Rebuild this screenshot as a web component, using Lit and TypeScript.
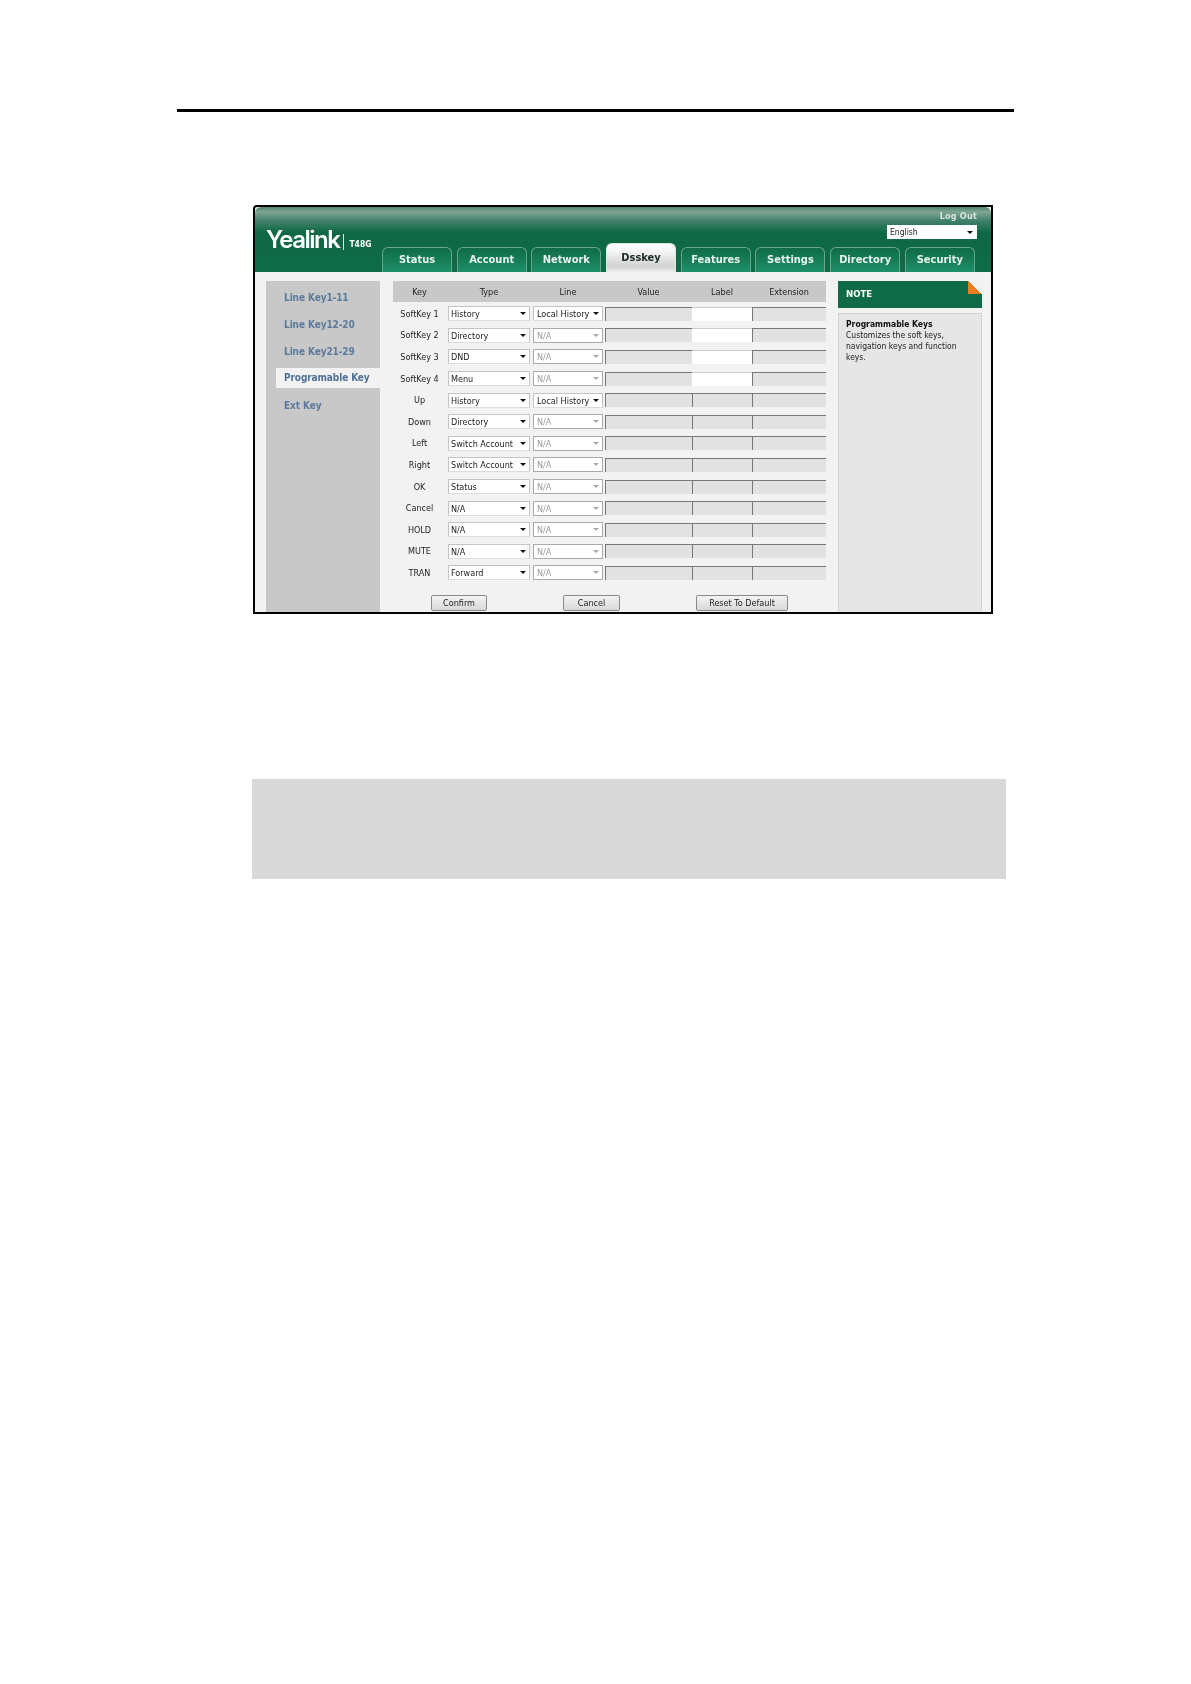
import { LitElement, html, css } from "lit";
import { customElement } from "lit/decorators.js";

const TABS = ["Status", "Account", "Network", "Dsskey", "Features", "Settings", "Directory", "Security"];
const NAV = ["Line Key1-11", "Line Key12-20", "Line Key21-29", "Programable Key", "Ext Key"];
const ROWS: [string, string, string, boolean][] = [
  ["SoftKey 1", "History", "Local History", true],
  ["SoftKey 2", "Directory", "N/A", true],
  ["SoftKey 3", "DND", "N/A", true],
  ["SoftKey 4", "Menu", "N/A", true],
  ["Up", "History", "Local History", false],
  ["Down", "Directory", "N/A", false],
  ["Left", "Switch Account", "N/A", false],
  ["Right", "Switch Account", "N/A", false],
  ["OK", "Status", "N/A", false],
  ["Cancel", "N/A", "N/A", false],
  ["HOLD", "N/A", "N/A", false],
  ["MUTE", "N/A", "N/A", false],
  ["TRAN", "Forward", "N/A", false],
];

@customElement("app-root")
export class AppRoot extends LitElement {
  static styles = css`
    :host { display: block; width: 1191px; height: 1684px; background: #fff; overflow: hidden;
      font-family: "DejaVu Sans Condensed", "DejaVu Sans", sans-serif; font-stretch: condensed; }
    * { box-sizing: border-box; }
    .page { padding: 109px 0 0 177px; }
    .rule { width: 837px; height: 3px; background: #000; }
    .frame { margin: 93px 0 0 76px; width: 740px; height: 409px; border: 2px solid #000;
      border-top-left-radius: 4px; background: #f2f2f2; overflow: hidden; filter: blur(0.35px); }
    .head { height: 65px; display: grid; grid-template-columns: 127px 1fr; grid-template-rows: 40px 25px;
      background: linear-gradient(#4f8570 0, #7fa595 5px, #3f806a 14px, #0e6844 26px, #0f6b48 100%);
      border-top-left-radius: 6px; border-top-right-radius: 6px; }
    .logo { grid-row: 1 / 3; display: flex; align-items: flex-start; padding: 18px 0 0 11px; color: #fff; }
    .logo b { font: 600 24px/30px Inter, sans-serif; letter-spacing: -1.5px; }
    .logo i { width: 1px; height: 16px; margin: 9px 5px 0 4px; background: #d8e8e0; }
    .logo span { font-size: 8.5px; font-weight: 700; line-height: 14px; margin-top: 12px; }
    .tools { display: flex; flex-direction: column; align-items: flex-end; padding-right: 14px; color: #fff; }
    .logout { font-size: 9px; font-weight: 700; line-height: 11px; color: #d8e6df; margin-top: 4px; letter-spacing: 0.2px; }
    .lang { width: 90px; height: 14px; margin-top: 3px; background: #fff; color: #222; font-size: 8.5px; line-height: 14px;
      padding-left: 3px; position: relative; }
    .tabs { display: flex; gap: 4.7px; align-items: flex-end; }
    .tab { width: 70px; height: 25px; border: 1px solid #6ea48e; border-bottom: 0; border-radius: 6px 6px 0 0;
      background: linear-gradient(#0f6b48, #1d9069); color: #e8f4ee; font-size: 11px; font-weight: 700; line-height: 24px;
      text-align: center; }
    .tab.on { height: 29px; background: linear-gradient(#fff, #f2f2f2 30%, #cfd3d1 80%, #eee); border-color: #dfe6e2;
      color: #1c2b2a; line-height: 27px; }
    .main { display: grid; grid-template-columns: 114px 446px 156px; padding: 9px 0 0 11px; height: 340px; }
    .nav { background: #c8c8c8; padding-top: 2.5px; display: flex; flex-direction: column; height: 340px; }
    .nav div { height: 27px; padding-left: 18px; font-size: 10px; font-weight: 700; line-height: 27px; color: #5c7a9c; letter-spacing: -0.1px; }
    .nav div.on { background: #f2f2f2; margin: 3.5px -4px 3.5px 10px; padding-left: 8px; height: 20px; line-height: 20px;
      color: #4d7095; white-space: nowrap; }
    .table { padding-left: 13px; }
    .row, .thead { display: grid; grid-template-columns: 53px 2px 82px 3px 70px 2px 87px 60px 74px; align-items: center; }
    .thead { height: 21px; background: #c8c8c8; margin-bottom: 1px; font-size: 9px; color: #222; text-align: center; }
    .thead span:nth-child(2) { grid-column: 3; }
    .thead span:nth-child(3) { grid-column: 5; }
    .thead span:nth-child(4) { grid-column: 7; }
    .thead span:nth-child(5) { grid-column: 8; }
    .thead span:nth-child(6) { grid-column: 9; }
    .row { height: 21.6px; font-size: 9px; color: #222; }
    .key { text-align: center; }
    .sel { height: 15px; background: #fff; border: 1px solid #c4c4c4; border-bottom-color: #ddd; line-height: 14px; padding-left: 2px;
      position: relative; color: #222; white-space: nowrap; overflow: hidden; }
    .sel.s1 { grid-column: 3; }
    .sel.s2 { grid-column: 5; padding-left: 3px; }
    .sel::after { content: ""; position: absolute; right: 3px; top: 5px; border: 3px solid transparent; border-top: 3px solid #111; border-bottom: 0; }
    .sel.off { color: #9a9a9a; border-color: #aaa; }
    .sel.off::after { border-top-color: #aaa; }
    .lang::after { content: ""; position: absolute; right: 4px; top: 6px; border: 3px solid transparent; border-top: 3px solid #111; border-bottom: 0; }
    .inp { height: 14px; background: #e2e2e2; border-top: 1px solid #777; border-left: 1px solid #777; }
    .inp.v { grid-column: 7; }
    .inp.l { grid-column: 8; }
    .inp.e { grid-column: 9; }
    .inp.white { background: #fff; border-left: 0; border-top-color: #ccc; }
    .btns { display: grid; grid-template-columns: 94px 57px 92px; column-gap: 76px; justify-content: start; margin-top: 11px; }
    .btn { height: 16px; border: 1px solid #8a8a8a; border-radius: 2px; background: linear-gradient(#f4f4f4, #d8d8d8); font-size: 9px;
      line-height: 15px; text-align: center; color: #222; }
    .btns .btn:nth-child(1) { margin-left: 38px; }
    .note { margin-left: 12px; width: 144px; }
    .note-h { position: relative; height: 27px; background: #0e6a47; color: #fff; font-size: 9.5px; font-weight: 700; line-height: 26px; padding-left: 8px; }
    .corner { position: absolute; right: 0; top: 0; width: 14px; height: 13px; background: linear-gradient(to top right, #e97f1f 50%, #f2f2f2 50%); }
    .note-b { margin-top: 5px; height: 320px; background: #e6e6e6; border: 1px solid #d2d2d2; padding: 5px 0 0 7px; font-size: 8.5px; line-height: 11px; color: #222; }
    .note-b b { display: block; color: #111; }
    .grey { margin: 165px 0 0 75px; width: 754px; height: 100px; background: #d8d8d8; }
  `;

  render() {
    return html`<div class="page">
      <div class="rule"></div>
      <div class="frame">
        <div class="head">
          <div class="logo"><b>Yealink</b><i></i><span>T48G</span></div>
          <div class="tools"><div class="logout">Log Out</div><div class="lang">English</div></div>
          <div class="tabs">${TABS.map((t) => html`<div class="tab ${t === "Dsskey" ? "on" : ""}">${t}</div>`)}</div>
        </div>
        <div class="main">
          <div class="nav">${NAV.map((n) => html`<div class="${n === "Programable Key" ? "on" : ""}">${n}</div>`)}</div>
          <div class="table">
            <div class="thead"><span>Key</span><span>Type</span><span>Line</span><span>Value</span><span>Label</span><span>Extension</span></div>
            ${ROWS.map(([k, t, l, w]) => html`<div class="row">
              <div class="key">${k}</div>
              <div class="sel s1">${t}</div>
              <div class="sel s2 ${l === "N/A" ? "off" : ""}">${l}</div>
              <div class="inp v"></div>
              <div class="inp l ${w ? "white" : ""}"></div>
              <div class="inp e"></div>
            </div>`)}
            <div class="btns"><div class="btn">Confirm</div><div class="btn">Cancel</div><div class="btn">Reset To Default</div></div>
          </div>
          <div class="note">
            <div class="note-h">NOTE<span class="corner"></span></div>
            <div class="note-b"><b>Programmable Keys</b>Customizes the soft keys,<br />navigation keys and function<br />keys.</div>
          </div>
        </div>
      </div>
      <div class="grey"></div>
    </div>`;
  }
}
